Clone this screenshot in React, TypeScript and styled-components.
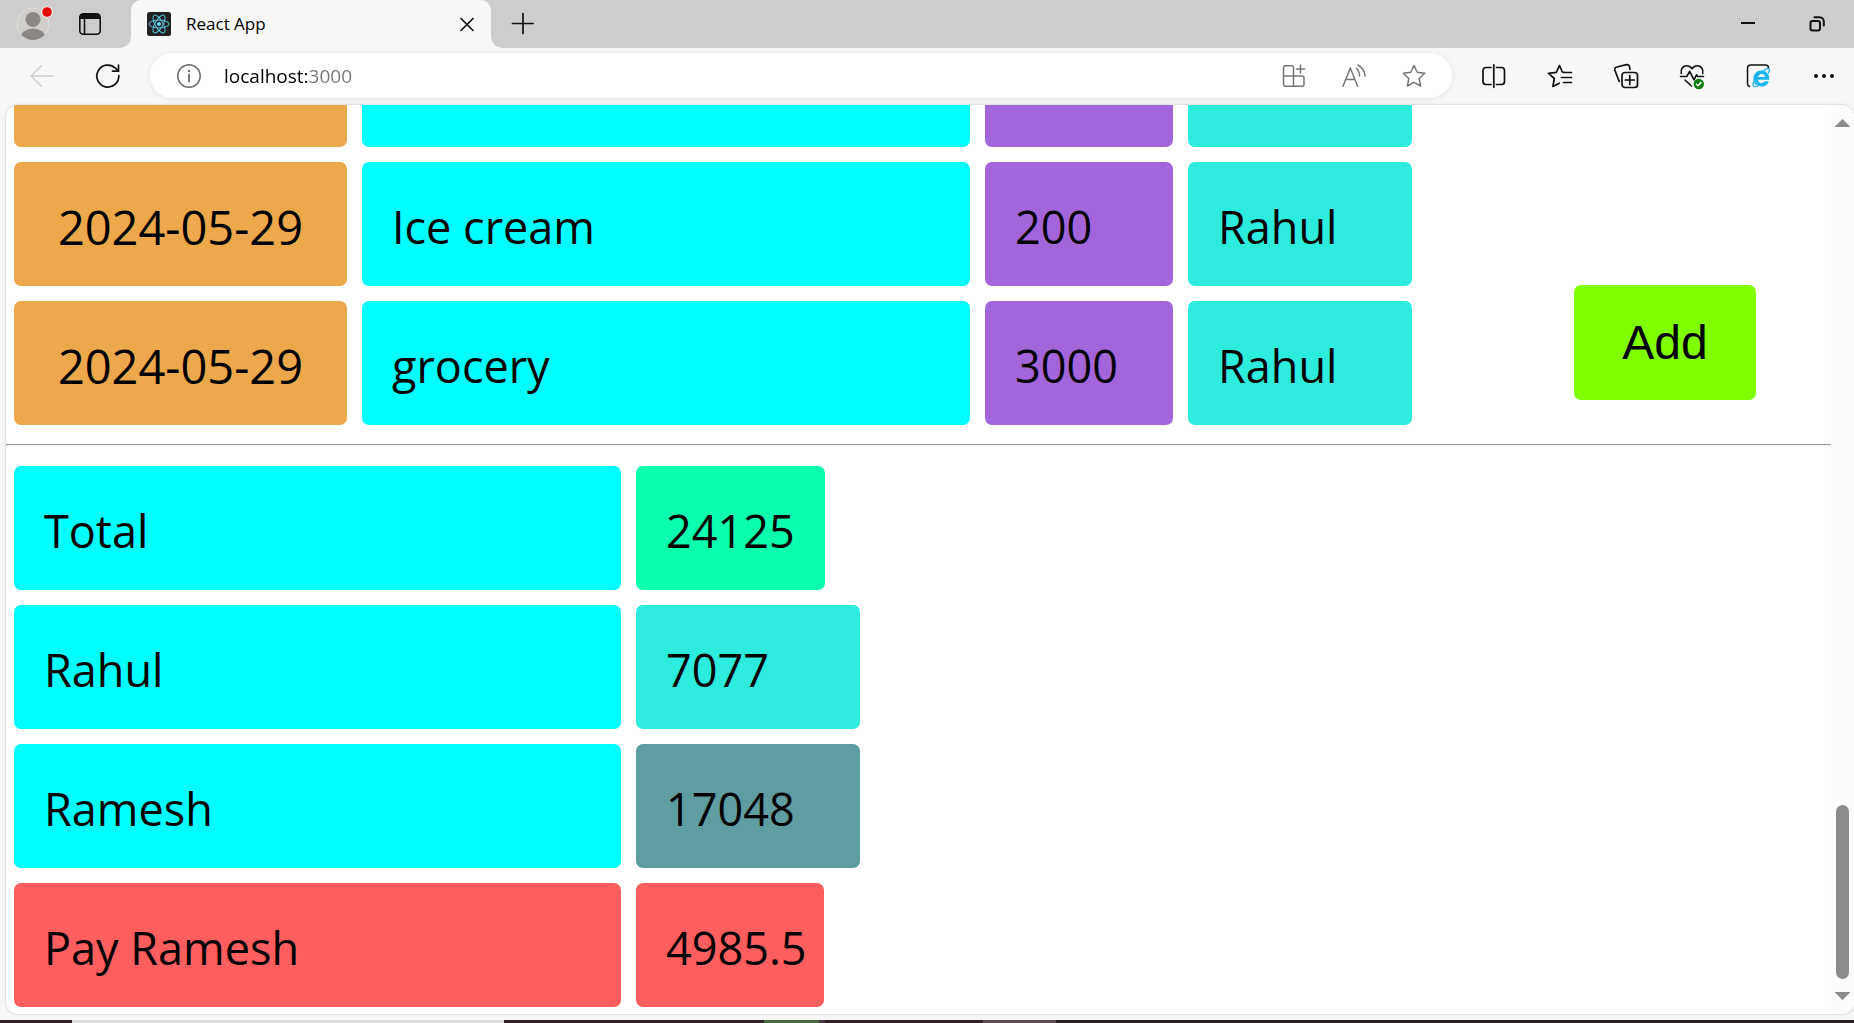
import React from 'react';
import styled, { createGlobalStyle } from 'styled-components';

const UI_FONT = '"Open Sans", "Noto Sans", sans-serif';
const CHROME = '#f7f7f7';
const STRIP = '#cdcdcd';

const GlobalStyle = createGlobalStyle`
  *, *::before, *::after { box-sizing: border-box; }
  body { margin: 0; background: ${CHROME}; font-family: ${UI_FONT}; color: #000; }
`;

/* ---------- window ---------- */

const Window = styled.div`
  display: flex;
  flex-direction: column;
  height: 100vh;
  overflow: hidden;
`;

const TabStrip = styled.header`
  display: flex;
  align-items: center;
  height: 48px;
  flex: none;
  background: ${STRIP};
  padding-right: 25px;
`;

const IconButton = styled.button<{ $color?: string; $size?: number }>`
  display: flex;
  flex: none;
  align-items: center;
  justify-content: center;
  width: ${(p) => p.$size ?? 24}px;
  height: ${(p) => p.$size ?? 24}px;
  padding: 0;
  border: 0;
  background: none;
  color: ${(p) => p.$color ?? '#111'};
  svg { display: block; overflow: visible; }
`;

const ProfileArea = styled.div`
  display: flex;
  align-items: center;
  gap: 28px;
  padding: 0 29px 0 16px;
`;

const Tab = styled.div`
  position: relative;
  display: flex;
  align-items: center;
  width: 360px;
  height: 48px;
  padding: 0 12px 0 16px;
  background: ${CHROME};
  border-radius: 10px 10px 0 0;
  &::before, &::after {
    content: '';
    position: absolute;
    bottom: 0;
    width: 10px;
    height: 10px;
  }
  &::before { left: -10px; background: radial-gradient(circle at 0 0, transparent 9px, ${CHROME} 10px); }
  &::after { right: -10px; background: radial-gradient(circle at 100% 0, transparent 9px, ${CHROME} 10px); }
`;

const TabTitle = styled.span`
  flex: 1;
  margin-left: 15px;
  font-size: 17px;
  line-height: 24px;
`;

const NewTab = styled.div`
  flex: 1;
  padding-left: 20px;
`;

const WindowButtons = styled.div`
  display: flex;
  gap: 45px;
`;

const Toolbar = styled.nav`
  display: flex;
  align-items: center;
  height: 57px;
  flex: none;
  padding: 0 18px 2px 30px;
`;

const NavButtons = styled.div`
  display: flex;
  gap: 42px;
  margin-right: 30px;
`;

const AddressBar = styled.div`
  display: flex;
  flex: 1;
  align-items: center;
  gap: 23px;
  height: 45px;
  padding: 0 26px 0 27px;
  border-radius: 23px;
  background: #fff;
  box-shadow: 0 1px 6px rgba(0, 0, 0, 0.08);
`;

const AddressInput = styled.input`
  flex: 1;
  min-width: 0;
  padding: 0;
  border: 0;
  outline: 0;
  font-family: ${UI_FONT};
  font-size: 19px;
  line-height: 28px;
  color: transparent;
  background: linear-gradient(90deg, #000 83px, #767676 83px);
  background-clip: text;
  -webkit-background-clip: text;
`;

const AddressActions = styled.div`
  display: flex;
  gap: 36px;
`;

const Tools = styled.div`
  display: flex;
  gap: 42px;
  margin-left: 30px;
`;

/* ---------- page ---------- */

const Viewport = styled.div`
  display: flex;
  flex: 1;
  min-height: 0;
  margin: 0 0 6px 6px;
  background: #fff;
  border-radius: 12px;
  overflow: hidden;
  box-shadow: 0 0 2px 1px rgba(0, 0, 0, 0.1);
`;

const Page = styled.main`
  display: flex;
  flex: 1;
  flex-direction: column;
  justify-content: flex-end;
  min-width: 0;
  padding-bottom: 7px;
`;

const ExpenseSection = styled.section`
  display: flex;
  align-items: flex-end;
  justify-content: space-between;
  padding: 0 75px 0 8px;
`;

const SummarySection = styled.section`
  padding: 0 8px;
`;

const Table = styled.table`
  display: flex;
  flex-direction: column;
  tbody { display: flex; flex-direction: column; gap: 15px; }
`;

const Row = styled.tr`
  display: flex;
  gap: 15px;
`;

const Cell = styled.td<{ $width: number; $bg: string }>`
  flex: 0 1 ${(p) => p.$width}px;
  width: ${(p) => p.$width}px;
  height: 124px;
  padding: 33px 0 27px 30px;
  border-radius: 7px;
  background: ${(p) => p.$bg};
  font-size: 45px;
  line-height: 64px;
  font-weight: 400;
  text-align: left;
  white-space: nowrap;
`;

const DateCell = styled(Cell)`
  padding-left: 0;
  font-size: 47px;
  text-align: center;
`;

const AddButton = styled.button`
  width: 182px;
  height: 115px;
  margin-bottom: 25px;
  border: 0;
  border-radius: 7px;
  background: #80ff00;
  color: #000;
  font-family: "Liberation Sans", Arial, sans-serif;
  font-size: 48px;
`;

const Divider = styled.hr`
  width: 100%;
  height: 2px;
  margin: 19px 0 20px;
  border: 0;
  border-top: 1px solid #9a9a9a;
  border-bottom: 1px solid #eee;
`;

const Scrollbar = styled.div`
  display: flex;
  flex-direction: column;
  align-items: center;
  width: 23px;
  padding: 14px 0;
  background: #fcfcfc;
`;

const Arrow = styled.div<{ $down?: boolean }>`
  width: 16px;
  height: 8px;
  background: #8b8b8b;
  clip-path: ${(p) => (p.$down ? 'polygon(0 0, 100% 0, 50% 100%)' : 'polygon(50% 0, 100% 100%, 0 100%)')};
`;

const Thumb = styled.div`
  width: 13px;
  height: 174px;
  margin: auto 0 13px;
  border-radius: 7px;
  background: #8b8b8b;
`;

const Taskbar = styled.div`
  height: 3px;
  flex: none;
  background: linear-gradient(
    90deg,
    #33222a 72px, #dcdcdc 72px, #dcdcdc 504px,
    #33222a 504px, #33222a 764px, #47683a 764px, #47683a 819px,
    #453a40 819px, #453a40 825px, #33222a 825px, #33222a 983px,
    #5c4c52 983px, #5c4c52 1056px, #2a1e24 1056px
  );
`;

/* ---------- icons ---------- */

const Icon = ({ children, size = 24, sw = 1.5 }: { children: React.ReactNode; size?: number; sw?: number }) => (
  <svg width={size} height={size} viewBox={`0 0 ${size} ${size}`} fill="none" stroke="currentColor"
    strokeWidth={sw} strokeLinecap="round" strokeLinejoin="round" aria-hidden="true">
    {children}
  </svg>
);

const ProfileIcon = () => (
  <svg width="34" height="34" viewBox="0 0 34 34" aria-hidden="true">
    <clipPath id="face"><circle cx="17" cy="17" r="16" /></clipPath>
    <circle cx="17" cy="17" r="16" fill="#d0cec9" stroke="#e0ded9" strokeWidth="1" />
    <g fill="#8a8784" clipPath="url(#face)">
      <circle cx="17" cy="12.5" r="7.5" />
      <ellipse cx="17" cy="31" rx="12.5" ry="9.5" />
    </g>
    <circle cx="31" cy="5" r="5.8" fill="#eee" />
    <circle cx="31" cy="5" r="4.800" fill="#e30808" />
  </svg>
);

const WorkspaceIcon = () => (
  <Icon sw={1.6}>
    <rect x="1.8" y="1.8" width="20.4" height="20.4" rx="3.5" />
    <path d="M1.8 7V5a3.2 3.2 0 0 1 3.2-3.2h14A3.2 3.2 0 0 1 22.200 5v2z" fill="currentColor" stroke="none" />
    <path d="M6.500 7v15" />
  </Icon>
);

const ReactIcon = () => (
  <svg width="24" height="24" viewBox="0 0 24 24" aria-hidden="true">
    <rect width="24" height="24" rx="2.500" fill="#222" />
    <g fill="none" stroke="#58c4dc" strokeWidth="1">
      <ellipse cx="12" cy="12" rx="10" ry="3.900" />
      <ellipse cx="12" cy="12" rx="10" ry="3.900" transform="rotate(60 12 12)" />
      <ellipse cx="12" cy="12" rx="10" ry="3.900" transform="rotate(120 12 12)" />
    </g>
    <circle cx="12" cy="12" r="2" fill="#61dafb" />
  </svg>
);

const STAR = 'M12 1.500l3.200 6.800 7.500 1-5.500 5.200 1.400 7.500L12 18.400 5.400 22l1.400-7.500L1.300 9.300l7.500-1z';

const ReloadIcon = () => (
  <Icon sw={1.7}>
    <path d="M22.800 11.500A11 11 0 1 1 19.500 4.200L22.500 7" />
    <path d="M22.500 1v6.200h-6" />
  </Icon>
);

const IeIcon = () => (
  <Icon sw={1.500}>
    <path d="M3.500 22.500C2 22 1.500 21 1.500 19.500V4A3 3 0 0 1 4.500 1h15a3 3 0 0 1 3 3" />
    <g stroke="none" fill="#1cb5ee">
      <path fillRule="evenodd" d="M15.500 6.500c4.800 0 8 3.300 7.800 9.300H12c.2 2 1.500 3.100 3.500 3.100 1.500 0 2.500-.6 3.100-1.600h4.300c-1 3.400-3.700 5.300-7.400 5.300-4.800 0-8-3.200-8-8 0-4.900 3.300-8.100 8-8.100zM12 13h7c-.2-1.900-1.500-3-3.500-3s-3.200 1.100-3.500 3z" />
    </g>
    <path d="M22.500 9c1-2 1.300-3.700.2-4.200C20 3.700 8 12.500 7 20.500c-.2 2.200 1.800 3 5.200 1.200" stroke="#1cb5ee" strokeWidth="1.300" />
  </Icon>
);

const HeartIcon = () => (
  <Icon sw={1.600}>
    <path d="M1.300 9.500C.3 5 3 1.800 6.500 1.800c2.200 0 4 1 5.500 3 1.500-2 3.300-3 5.500-3 3.500 0 6.200 3.200 5.200 7.700" />
    <path d="M.5 12.500h6.200l3-5.200 4.300 8.500 2.500-5 1.200 1.700h5.800" />
    <path d="M5 16l6.500 6" />
    <circle cx="18.800" cy="20" r="5.200" fill="#107c10" stroke="none" />
    <path d="M16.500 20.300l1.500 1.500 3-3.300" stroke="#fff" />
  </Icon>
);

/* ---------- data ---------- */

const ORANGE = '#eea84c';
const CYAN = '#00ffff';
const PURPLE = '#a366da';
const TURQUOISE = '#2eecdd';
const RED = '#ff5e5e';

const expenses = [
  { id: 1, date: '', item: '', amount: '', who: '' },
  { id: 2, date: '2024-05-29', item: 'Ice cream', amount: '200', who: 'Rahul' },
  { id: 3, date: '2024-05-29', item: 'grocery', amount: '3000', who: 'Rahul' },
];

const summary = [
  { label: 'Total', value: '24125', labelBg: CYAN, valueBg: '#0affaf', width: 189 },
  { label: 'Rahul', value: '7077', labelBg: CYAN, valueBg: TURQUOISE, width: 224 },
  { label: 'Ramesh', value: '17048', labelBg: CYAN, valueBg: '#5f9ea0', width: 224 },
  { label: 'Pay Ramesh', value: '4985.5', labelBg: RED, valueBg: RED, width: 188 },
];

export default function App() {
  return (
    <Window>
      <GlobalStyle />
      <TabStrip>
        <ProfileArea>
          <IconButton $size={34} aria-label="Profile"><ProfileIcon /></IconButton>
          <IconButton aria-label="Workspaces"><WorkspaceIcon /></IconButton>
        </ProfileArea>
        <Tab>
          <ReactIcon />
          <TabTitle>React App</TabTitle>
          <IconButton aria-label="Close tab">
            <Icon sw={1.700}><path d="M6 6.500l12 12M18 6.500l-12 12" /></Icon>
          </IconButton>
        </Tab>
        <NewTab>
          <IconButton aria-label="New tab">
            <Icon sw={1.700}><path d="M12 1.500v20M1.500 11.500h20.500" /></Icon>
          </IconButton>
        </NewTab>
        <WindowButtons>
          <IconButton aria-label="Minimize">
            <Icon sw={2}><path d="M5 11h14" strokeLinecap="butt" /></Icon>
          </IconButton>
          <IconButton aria-label="Restore">
            <Icon sw={2}>
              <rect x="5.500" y="9" width="9.500" height="9.500" rx="2" />
              <path d="M9.500 5.300h5A4.300 4.300 0 0 1 18.800 9.600v4" />
            </Icon>
          </IconButton>
        </WindowButtons>
      </TabStrip>

      <Toolbar>
        <NavButtons>
          <IconButton $color="#cfcfcf" aria-label="Back">
            <Icon><path d="M23.500 12H1M11.500 1.800L1 12l10.500 10.200" /></Icon>
          </IconButton>
          <IconButton aria-label="Reload"><ReloadIcon /></IconButton>
        </NavButtons>
        <AddressBar>
          <IconButton $color="#6b6b6b" aria-label="Site information">
            <Icon>
              <circle cx="12" cy="12" r="11.200" />
              <path d="M12 10.500v7" strokeWidth="1.800" />
              <circle cx="12" cy="7" r="1.200" fill="currentColor" stroke="none" />
            </Icon>
          </IconButton>
          <AddressInput aria-label="Address" defaultValue="localhost:3000" />
          <AddressActions>
            <IconButton $color="#767676" aria-label="Apps">
              <Icon>
                <path d="M3.500 1.800h6a2 2 0 0 1 2 2v18.400h-8a2 2 0 0 1-2-2V3.800a2 2 0 0 1 2-2zM1.500 12h18.500a2 2 0 0 1 2 2v6.200a2 2 0 0 1-2 2h-9M18.500 1v8M14.500 5h8" />
              </Icon>
            </IconButton>
            <IconButton $color="#767676" aria-label="Read aloud">
              <Icon><path d="M1 22.200L8.300 4l7.300 18.200M3.800 15.500h9M14.500 4.500c2 1.800 3 4.500 3 7.500M16 1c4.500 2.500 6.800 6.500 7 11" /></Icon>
            </IconButton>
            <IconButton $color="#767676" aria-label="Add to favorites">
              <Icon><path d={STAR} /></Icon>
            </IconButton>
          </AddressActions>
        </AddressBar>
        <Tools>
          <IconButton aria-label="Split screen">
            <Icon sw={1.700}>
              <path d="M9 3.500H4a3 3 0 0 0-3 3v11a3 3 0 0 0 3 3h5M14.500 3.500h5a3 3 0 0 1 3 3v11a3 3 0 0 1-3 3h-5M11.800.8v22.500" />
            </Icon>
          </IconButton>
          <IconButton aria-label="Favorites">
            <Icon sw={1.700}>
              <path d="M16.800 8.300l-2.500-.3L11.500 1.500 8.300 8.300.5 9.300l5.800 5.200L4.900 22.500l6.300-3.300M15.500 8.500h8M13.500 13.500h10M15.500 18.500h8" />
            </Icon>
          </IconButton>
          <IconButton aria-label="Collections">
            <Icon sw={1.700}>
              <path d="M5.200 17.500L.8 6a2.500 2.500 0 0 1 2-3L12.500.6a2.500 2.500 0 0 1 3 2L16 5.500" />
              <rect x="8" y="8.500" width="15.500" height="15" rx="3" />
              <path d="M15.800 11.500v9M11.300 16h9" />
            </Icon>
          </IconButton>
          <IconButton aria-label="Browser essentials"><HeartIcon /></IconButton>
          <IconButton aria-label="Internet Explorer mode"><IeIcon /></IconButton>
          <IconButton aria-label="Settings and more">
            <Icon>
              <g fill="currentColor" stroke="none">
                <circle cx="4" cy="12" r="2" /><circle cx="12" cy="12" r="2" /><circle cx="20" cy="12" r="2" />
              </g>
            </Icon>
          </IconButton>
        </Tools>
      </Toolbar>

      <Viewport>
        <Page>
          <ExpenseSection>
            <Table>
              <tbody>
                {expenses.map((e) => (
                  <Row key={e.id}>
                    <DateCell $width={333} $bg={ORANGE}>{e.date}</DateCell>
                    <Cell $width={608} $bg={CYAN}>{e.item}</Cell>
                    <Cell $width={188} $bg={PURPLE}>{e.amount}</Cell>
                    <Cell $width={224} $bg={TURQUOISE}>{e.who}</Cell>
                  </Row>
                ))}
              </tbody>
            </Table>
            <AddButton>Add</AddButton>
          </ExpenseSection>
          <Divider />
          <SummarySection>
            <Table>
              <tbody>
                {summary.map((s) => (
                  <Row key={s.label}>
                    <Cell as="th" scope="row" $width={607} $bg={s.labelBg}>{s.label}</Cell>
                    <Cell $width={s.width} $bg={s.valueBg}>{s.value}</Cell>
                  </Row>
                ))}
              </tbody>
            </Table>
          </SummarySection>
        </Page>
        <Scrollbar>
          <Arrow />
          <Thumb />
          <Arrow $down />
        </Scrollbar>
      </Viewport>
      <Taskbar />
    </Window>
  );
}
